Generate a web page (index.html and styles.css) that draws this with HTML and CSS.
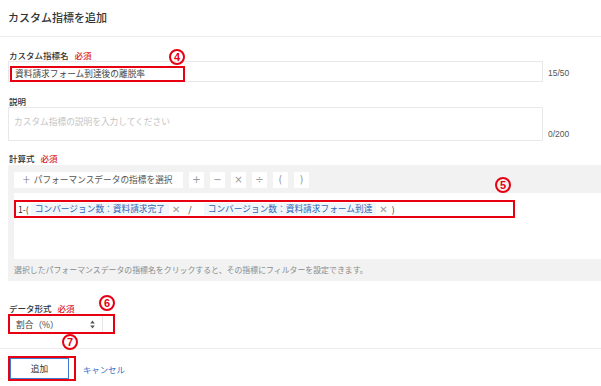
FILE: index.html
```html
<!DOCTYPE html>
<html lang="ja">
<head>
  <meta charset="UTF-8">
  <title>カスタム指標を追加</title>
  <link rel="stylesheet" href="styles.css">
</head>
<body>
  <div class="page">
    <div class="header">
      <h1 class="title">カスタム指標を追加</h1>
    </div>

    <div class="form">
      <!-- カスタム指標名 -->
      <div class="field field-name">
        <div class="label">カスタム指標名 <span class="req">必須</span></div>
        <div class="row">
          <div class="input"><span class="mark">資料請求フォーム到達後の離脱率</span></div>
          <span class="count">15/50</span>
        </div>
      </div>

      <!-- 説明 -->
      <div class="field field-desc">
        <div class="label">説明</div>
        <div class="row row-bottom">
          <div class="textarea">カスタム指標の説明を入力してください</div>
          <span class="count">0/200</span>
        </div>
      </div>

      <!-- 計算式 -->
      <div class="field field-formula">
        <div class="label">計算式 <span class="req">必須</span></div>
        <div class="formula">
          <div class="toolbar">
            <span class="pick"><span class="plus">＋</span>パフォーマンスデータの指標を選択</span>
            <span class="op">+</span>
            <span class="op">−</span>
            <span class="op">×</span>
            <span class="op">÷</span>
            <span class="op">(</span>
            <span class="op">)</span>
          </div>
          <div class="canvas">
            <div class="expr">
              <span class="tok">1-(</span>
              <span class="chip">コンバージョン数：資料請求完了</span>
              <span class="del">✕</span>
              <span class="tok slash">/</span>
              <span class="chip">コンバージョン数：資料請求フォーム到達</span>
              <span class="del">✕</span>
              <span class="tok">)</span>
            </div>
          </div>
          <div class="hint">選択したパフォーマンスデータの指標名をクリックすると、その指標にフィルターを設定できます。</div>
        </div>
      </div>

      <!-- データ形式 -->
      <div class="field field-type">
        <div class="label">データ形式 <span class="req">必須</span></div>
        <div class="select-mark">
          <div class="select">
            <span>割合（%）</span>
            <span class="arrows">
              <svg width="5" height="9" viewBox="0 0 5 9"><path d="M2.5 0.5 L4.8 3.5 L0.2 3.5 Z M2.5 8.5 L4.8 5.5 L0.2 5.5 Z" fill="#555"/></svg>
            </span>
          </div>
        </div>
      </div>
    </div>

    <div class="footer">
      <div class="btn-mark"><button class="btn">追加</button></div>
      <a class="cancel">キャンセル</a>
    </div>

    <!-- 注釈番号 -->
    <span class="num n4">4</span>
    <span class="num n5">5</span>
    <span class="num n6">6</span>
    <span class="num n7">7</span>
  </div>
</body>
</html>
```

FILE: styles.css
```css
* { box-sizing: border-box; }

body {
  margin: 0;
  background: #fff;
  font-family: "Noto Sans CJK JP", "Noto Sans", sans-serif;
  color: #333;
}

.page {
  position: relative;
  width: 601px;
  height: 386px;
  overflow: hidden;
}

.header {
  padding: 9px 8px 11px;
  border-bottom: 1px solid #ececec;
}

.title {
  margin: 0;
  font-size: 11px;
  line-height: 16px;
  font-weight: 500;
}

.form { padding-left: 8px; }

.label {
  display: flex;
  gap: 6px;
  font-size: 8.5px;
  line-height: 12px;
  font-weight: 500;
  padding-left: 1px;
}

.req { color: #d8212a; }

.field-name { margin-top: 12px; }
.field-desc { margin-top: 13px; }
.field-formula { margin-top: 11px; }
.field-type { margin-top: 21px; }

.row {
  display: flex;
  align-items: center;
  gap: 5px;
}

.row-bottom { align-items: flex-end; }

.input {
  width: 535px;
  height: 21px;
  border: 1px solid #e8e8e8;
  padding: 4px 0 0 1px;
  font-size: 8.7px;
  color: #444;
}

.mark {
  display: inline-block;
  width: 175px;
  height: 16px;
  border: 2px solid #e60012;
  padding-left: 3px;
  line-height: 12px;
}

.count {
  font-family: "Liberation Sans", sans-serif;
  font-size: 8.5px;
  color: #555;
  padding-top: 2px;
}

.row-bottom .count { padding-bottom: 2px; }

.textarea {
  width: 535px;
  height: 34px;
  border: 1px solid #e8e8e8;
  padding: 8px 5px;
  font-size: 8.7px;
  line-height: 12px;
  color: #c4c4c4;
}

.formula {
  margin-top: 1px;
  background: #f2f2f2;
}

.toolbar {
  display: flex;
  gap: 6px;
  height: 28px;
  padding: 7px 0 5px 6px;
}

.pick {
  display: flex;
  gap: 3px;
  width: 169px;
  height: 16px;
  padding-left: 8px;
  background: #fff;
  font-size: 8.7px;
  line-height: 16px;
  color: #555;
}

.plus { color: #777; }

.op {
  width: 15px;
  height: 16px;
  background: #fff;
  text-align: center;
  font-family: "DejaVu Sans", sans-serif;
  font-size: 10px;
  line-height: 16px;
  color: #999;
}

.canvas {
  margin-left: 6px;
  height: 66px;
  padding-top: 7px;
  background: #fff;
}

.expr {
  display: flex;
  align-items: center;
  width: 501px;
  height: 18px;
  border: 2px solid #e60012;
  padding-left: 2px;
  font-size: 8.7px;
}

.tok { color: #333; }
.slash { margin: 0 5px 0 4px; }

.chip {
  margin-left: 7px;
  padding: 0 4px;
  line-height: 12px;
  background: #f1f6fc;
  color: #2b68b8;
}

.expr .chip + .del { margin-left: 3px; }

.del {
  margin-right: 4px;
  font-family: "DejaVu Sans", sans-serif;
  font-size: 10px;
  color: #9a9a9a;
}

.expr .chip:nth-of-type(2) { margin-left: 2px; }

.hint {
  padding-left: 6px;
  font-size: 7.9px;
  line-height: 22px;
  color: #8a8a8a;
}

.select-mark {
  display: flex;
  width: 107px;
  height: 20px;
  border: 2px solid #e60012;
  padding-right: 10px;
}

.select {
  flex: 1;
  display: flex;
  justify-content: space-between;
  align-items: center;
  padding: 0 7px 0 6px;
  border-right: 1px solid #e6e6e6;
  font-size: 8.7px;
  color: #444;
}

.arrows { display: flex; }

.footer {
  display: flex;
  align-items: center;
  gap: 7px;
  margin-top: 14px;
  padding: 7px 0 0 8px;
  border-top: 1px solid #ececec;
}

.btn-mark {
  display: flex;
  height: 25px;
  border: 2px solid #e60012;
  padding-right: 5px;
}

.btn {
  width: 59px;
  height: 21px;
  padding: 0;
  border: 1px solid #3f7bd0;
  background: #fff;
  font-family: inherit;
  font-size: 8.7px;
  color: #333;
}

.cancel {
  font-size: 8.4px;
  color: #2e6fc7;
}

.num {
  position: absolute;
  display: flex;
  justify-content: center;
  align-items: center;
  width: 16px;
  height: 16px;
  border: 2px solid #e60012;
  border-radius: 50%;
  font-family: "Liberation Sans", sans-serif;
  font-size: 11px;
  font-weight: 700;
  color: #e60012;
}

.n4 { left: 169px; top: 49px; }
.n5 { left: 495px; top: 177px; }
.n6 { left: 99px; top: 295px; }
.n7 { left: 62px; top: 334px; }
```
